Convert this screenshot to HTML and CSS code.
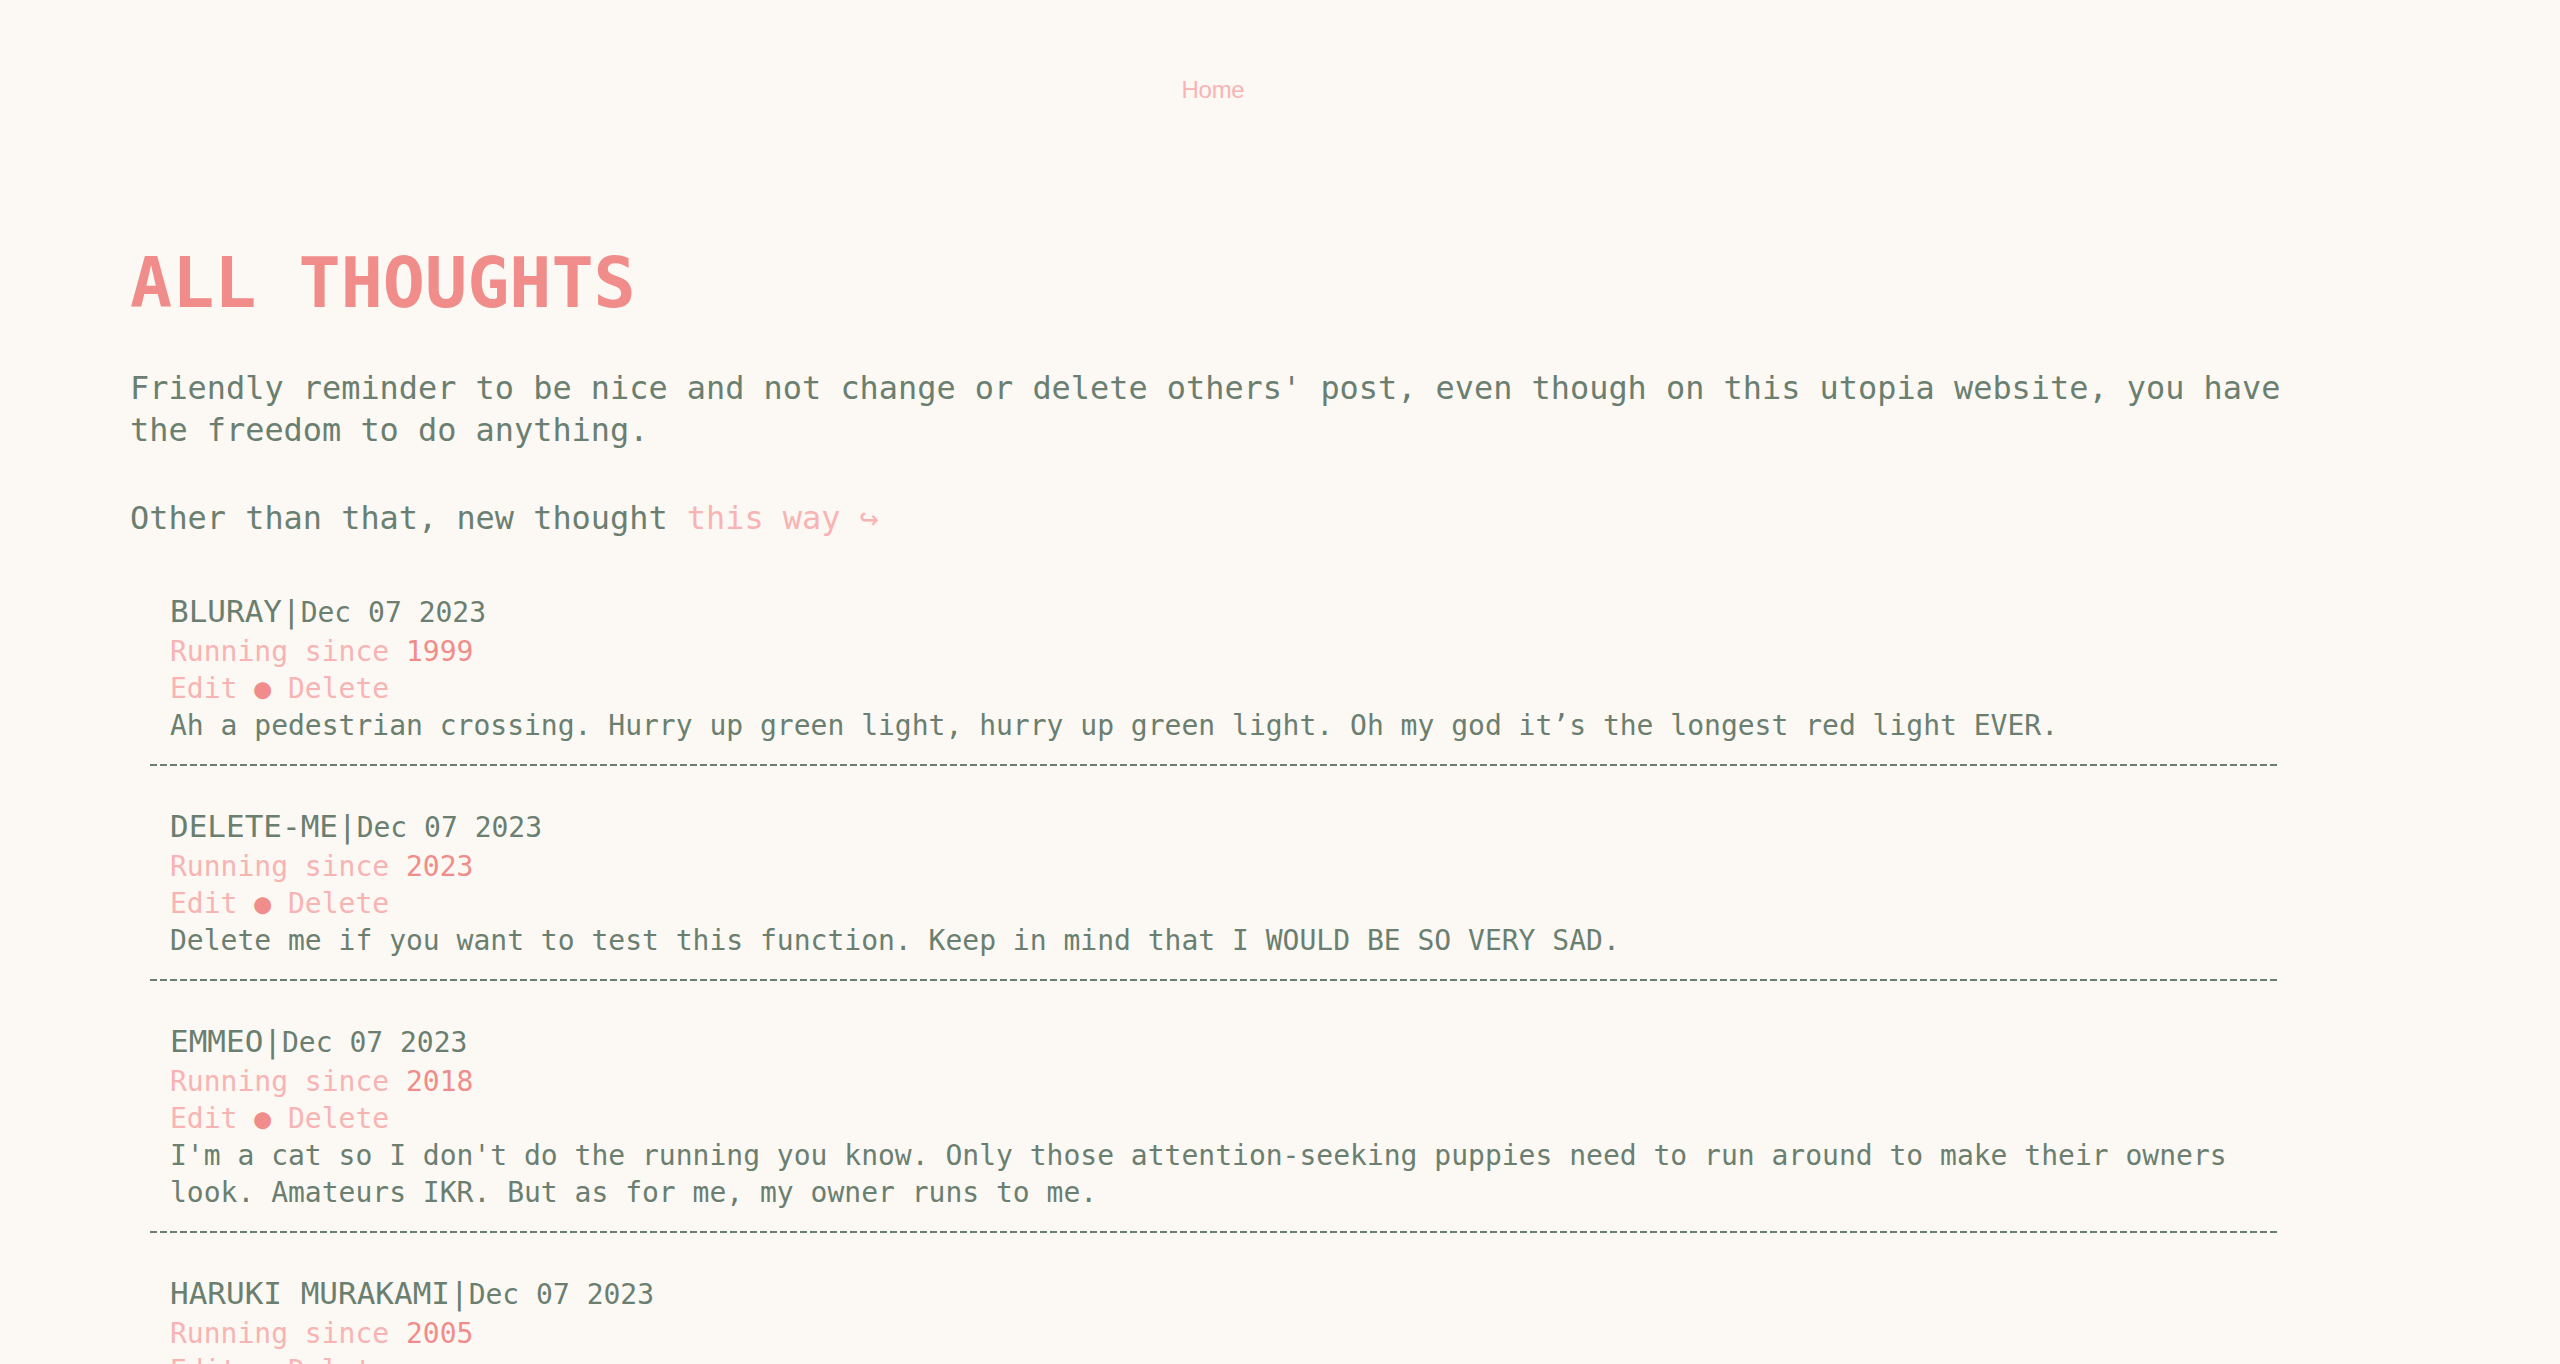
FILE: index.html
```html
<!DOCTYPE html>
<html lang="en">
<head>
<meta charset="utf-8">
<title>All Thoughts</title>
<link rel="stylesheet" href="styles.css">
</head>
<body>
<nav class="nav"><a class="nav-link" href="#">Home</a></nav>
<main class="main">
  <h1 class="title">ALL THOUGHTS</h1>
  <p class="intro">Friendly reminder to be nice and not change or delete others' post, even though on this utopia website, you have the freedom to do anything.</p>
  <p class="intro">Other than that, new thought <a class="intro-link" href="#">this way ↪</a></p>
  <ul class="posts">
    <li class="post">
      <div class="post-head"><span class="author">BLURAY|</span><span class="date">Dec 07 2023</span></div>
      <div class="since">Running since <span class="year">1999</span></div>
      <div class="actions"><a class="action" href="#">Edit</a> <span class="dot">●</span> <a class="action" href="#">Delete</a></div>
      <p class="body">Ah a pedestrian crossing. Hurry up green light, hurry up green light. Oh my god it’s the longest red light EVER.</p>
    </li>
    <li class="post">
      <div class="post-head"><span class="author">DELETE-ME|</span><span class="date">Dec 07 2023</span></div>
      <div class="since">Running since <span class="year">2023</span></div>
      <div class="actions"><a class="action" href="#">Edit</a> <span class="dot">●</span> <a class="action" href="#">Delete</a></div>
      <p class="body">Delete me if you want to test this function. Keep in mind that I WOULD BE SO VERY SAD.</p>
    </li>
    <li class="post">
      <div class="post-head"><span class="author">EMMEO|</span><span class="date">Dec 07 2023</span></div>
      <div class="since">Running since <span class="year">2018</span></div>
      <div class="actions"><a class="action" href="#">Edit</a> <span class="dot">●</span> <a class="action" href="#">Delete</a></div>
      <p class="body">I'm a cat so I don't do the running you know. Only those attention-seeking puppies need to run around to make their owners look. Amateurs IKR. But as for me, my owner runs to me.</p>
    </li>
    <li class="post">
      <div class="post-head"><span class="author">HARUKI MURAKAMI|</span><span class="date">Dec 07 2023</span></div>
      <div class="since">Running since <span class="year">2005</span></div>
      <div class="actions"><a class="action" href="#">Edit</a> <span class="dot">●</span> <a class="action" href="#">Delete</a></div>
    </li>
  </ul>
</main>
</body>
</html>
```

FILE: styles.css
```css
html, body {
  margin: 0;
  padding: 0;
  background: #fcf8f4;
}

body {
  font-family: "DejaVu Sans Mono", "Liberation Mono", monospace;
  color: #6a7f70;
}

a {
  text-decoration: none;
}

.nav {
  padding: 76px 134px 0 0;
  text-align: center;
  line-height: 28px;
}

.nav-link {
  font-family: "Liberation Sans", Arial, sans-serif;
  font-size: 24px;
  color: #f7b4b3;
  letter-spacing: -0.3px;
}

.main {
  margin-left: 130px;
  width: 2168px;
}

.title {
  margin: 141px 0 0 0;
  font-size: 70px;
  line-height: 71px;
  font-weight: bold;
  color: #f08d8a;
}

.intro {
  margin: 48px 0 0 0;
  font-size: 31.9px;
  line-height: 42px;
}

.intro + .intro {
  margin-top: 46px;
}

.intro-link {
  color: #f7b4b3;
}

.posts {
  list-style: none;
  margin: 12px 0 0 0;
  padding: 0;
}

.post {
  margin: 0 20px;
  padding: 40px 20px 22px 20px;
  font-size: 28px;
  background-image: linear-gradient(to right, #6a7f70 70%, transparent 70%);
  background-size: 10px 2px;
  background-repeat: repeat-x;
  background-position: left bottom;
}

.post-head {
  font-size: 28px;
  line-height: 41px;
}

.author {
  font-size: 31px;
}

.date {
  font-size: 28px;
}

.since,
.actions,
.body {
  font-size: 28px;
  line-height: 37px;
}

.since {
  color: #f7b4b3;
}

.year {
  color: #f08d8a;
}

.action {
  color: #f7b4b3;
}

.dot {
  color: #f08d8a;
}

.body {
  margin: 0;
}
```
